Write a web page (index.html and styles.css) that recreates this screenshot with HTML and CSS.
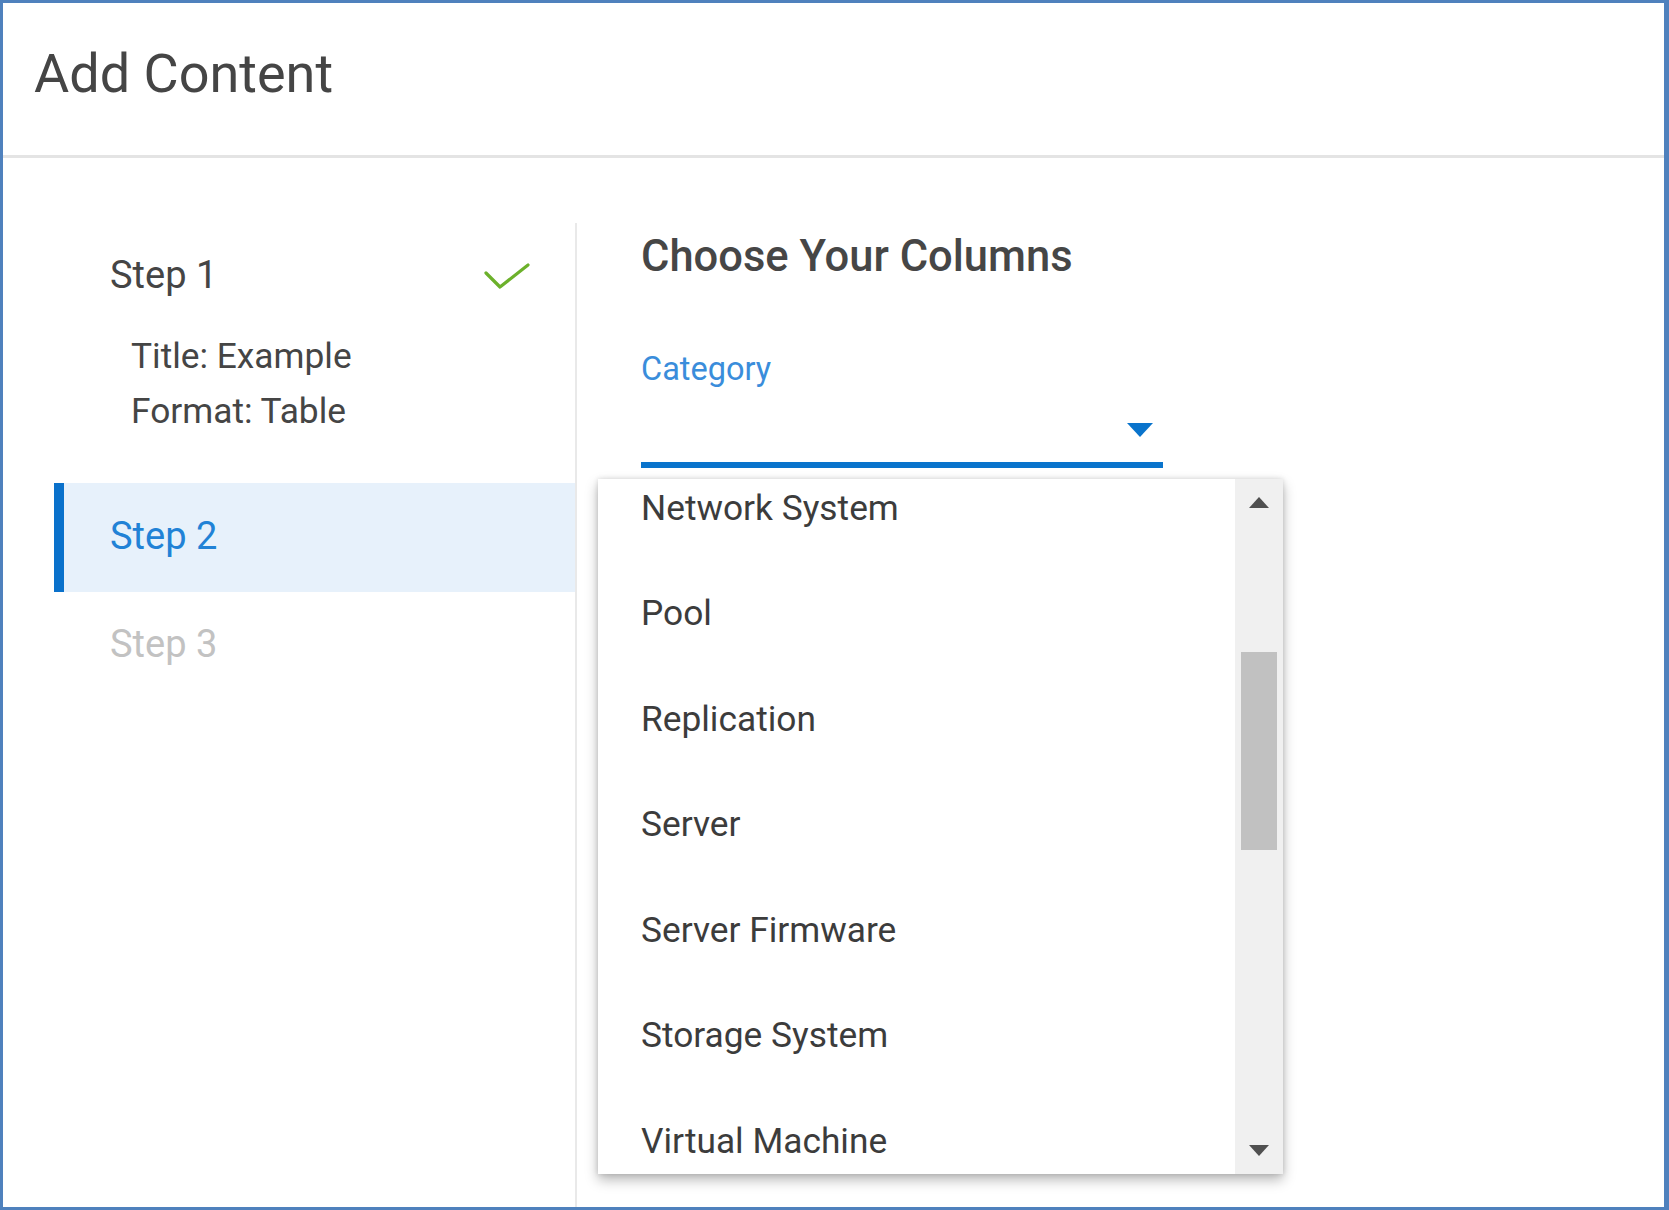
FILE: index.html
```html
<!DOCTYPE html>
<html lang="en">
<head>
<meta charset="utf-8">
<title>Add Content</title>
<link rel="stylesheet" href="styles.css">
</head>
<body>
<div class="frame">
  <header class="header">
    <h1 class="title">Add Content</h1>
  </header>
  <div class="main">
    <nav class="steps">
      <div class="step step-done">
        <div class="step-head">
          <span class="step-name">Step 1</span>
          <svg class="check" width="46" height="28" viewBox="0 0 46 28" aria-hidden="true">
            <polyline points="2,11 16,25 44,3" fill="none" stroke="#6cb12b" stroke-width="3.2" stroke-linecap="round" stroke-linejoin="round"/>
          </svg>
        </div>
        <div class="step-details">
          <div>Title: Example</div>
          <div>Format: Table</div>
        </div>
      </div>
      <div class="step step-active">
        <div class="step-head"><span class="step-name">Step 2</span></div>
      </div>
      <div class="step step-pending">
        <div class="step-head"><span class="step-name">Step 3</span></div>
      </div>
    </nav>
    <section class="content">
      <h2 class="content-title">Choose Your Columns</h2>
      <div class="field">
        <label class="field-label">Category</label>
        <div class="select">
          <svg class="select-arrow" width="26" height="14" viewBox="0 0 26 14" aria-hidden="true">
            <polygon points="0,0 26,0 13,14" fill="#0a74cc"/>
          </svg>
          <div class="menu">
            <div class="menu-list">
              <ul class="menu-items">
                <li>Network System</li>
                <li>Pool</li>
                <li>Replication</li>
                <li>Server</li>
                <li>Server Firmware</li>
                <li>Storage System</li>
                <li>Virtual Machine</li>
              </ul>
            </div>
            <div class="scrollbar">
              <svg class="sb-arrow" width="20" height="11" viewBox="0 0 20 11" aria-hidden="true">
                <polygon points="10,0 20,11 0,11" fill="#505050"/>
              </svg>
              <div class="sb-thumb"></div>
              <svg class="sb-arrow sb-down" width="20" height="11" viewBox="0 0 20 11" aria-hidden="true">
                <polygon points="0,0 20,0 10,11" fill="#505050"/>
              </svg>
            </div>
          </div>
        </div>
      </div>
    </section>
  </div>
</div>
</body>
</html>
```

FILE: styles.css
```css
* { box-sizing: border-box; }

html, body {
  margin: 0;
  padding: 0;
  background: #ffffff;
  overflow: hidden;
}

body {
  font-family: Roboto, "Noto Sans", "Liberation Sans", sans-serif;
  color: #434343;
}

.frame {
  width: 1669px;
  height: 1210px;
  border-style: solid;
  border-color: #4f81bd;
  border-width: 3px 5px 3px 3px;
  display: flex;
  flex-direction: column;
  overflow: hidden;
}

.header {
  height: 155px;
  border-bottom: 3px solid #e4e4e4;
  padding: 39px 0 0 31px;
}

.title {
  margin: 0;
  font-size: 54px;
  font-weight: 400;
  line-height: 64px;
  color: #454545;
}

.main {
  flex: 1;
  display: flex;
  padding-top: 65px;
}

.steps {
  width: 574px;
  border-right: 2px solid #e9e9e9;
  flex-shrink: 0;
}

.step-head {
  height: 108px;
  margin-left: 51px;
  padding: 0 45px 4px 56px;
  display: flex;
  align-items: center;
  justify-content: space-between;
  font-size: 38px;
  line-height: 44px;
}

.step-done .step-head { color: #454545; }

.check { display: block; margin-top: 2px; }

.step-details {
  margin: -2px 0 44px 128px;
  font-size: 35.3px;
  line-height: 55px;
  color: #454545;
}

.step-active .step-head {
  height: 109px;
  background: #e7f1fb;
  border-left: 10px solid #0a71cb;
  padding-left: 46px;
  color: #2182d6;
}

.step-pending .step-head { color: #c2c2c2; }

.content {
  flex: 1;
  padding-left: 64px;
}

.content-title {
  margin: 9px 0 0;
  font-size: 43.5px;
  font-weight: 500;
  line-height: 50px;
  color: #464646;
}

.field {
  width: 522px;
  margin-top: 67px;
}

.field-label {
  display: block;
  font-size: 32.5px;
  line-height: 40px;
  color: #3a8ddb;
}

.select {
  position: relative;
  height: 79px;
  border-bottom: 6px solid #0a74cc;
  display: flex;
  justify-content: flex-end;
  align-items: flex-start;
  padding: 34px 10px 0 0;
}

.select-arrow { display: block; }

.menu {
  position: absolute;
  left: -43px;
  top: calc(100% + 16.5px);
  width: 685px;
  height: 695px;
  background: #ffffff;
  display: flex;
  box-shadow: 0 6px 12px rgba(0, 0, 0, 0.28), 0 0 5px rgba(0, 0, 0, 0.14);
}

.menu-list {
  flex: 1;
  overflow: hidden;
}

.menu-items {
  list-style: none;
  margin: -23px 0 0;
  padding: 0;
}

.menu-items li {
  height: 105.5px;
  line-height: 105.5px;
  padding-left: 43px;
  font-size: 35.3px;
  color: #3c3c3c;
  white-space: nowrap;
}

.scrollbar {
  width: 48px;
  flex-shrink: 0;
  background: #f0f0f0;
  display: flex;
  flex-direction: column;
  align-items: center;
  padding: 18px 0 18px;
}

.sb-arrow { display: block; }

.sb-thumb {
  width: 36px;
  height: 198px;
  margin-top: 144px;
  background: #c1c1c1;
}

.sb-down { margin-top: auto; }
```
